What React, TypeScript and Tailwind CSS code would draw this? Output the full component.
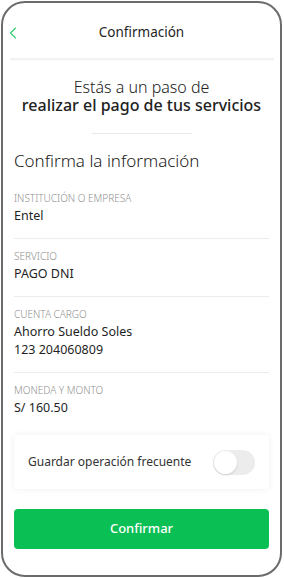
import { ChevronLeft } from "lucide-react";

interface Field {
  label: string;
  values: string[];
}

const FIELDS: Field[] = [
  { label: "INSTITUCIÓN O EMPRESA", values: ["Entel"] },
  { label: "SERVICIO", values: ["PAGO DNI"] },
  { label: "CUENTA CARGO", values: ["Ahorro Sueldo Soles", "123 204060809"] },
  { label: "MONEDA Y MONTO", values: ["S/ 160.50"] },
];

function InfoRow({ field, last }: { field: Field; last: boolean }) {
  return (
    <div className={last ? "pt-[10px]" : "border-b border-[#ececec] pt-[10px] pb-[13px]"}>
      <p className="text-[10px] leading-[14px] font-light text-[#8f8f8f]">{field.label}</p>
      <div className="mt-[2px]">
        {field.values.map((v) => (
          <p key={v} className="text-[12.5px] leading-[18px] text-[#1f1f1f]">
            {v}
          </p>
        ))}
      </div>
    </div>
  );
}

export default function App() {
  return (
    <div className="w-[284px] h-[578px] bg-white" style={{ fontFamily: "'Noto Sans', sans-serif" }}>
      <div className="ml-[1px] mt-[1px] w-[281px] h-[576px] overflow-hidden rounded-[24px] border-2 border-[#6b6b6b] bg-white">
        {/* Header */}
        <div className="relative flex h-[55px] items-center justify-center pt-[3px]">
          <ChevronLeft className="absolute left-0 top-[20px] h-[20px] w-[20px] text-[#2ecc71]" strokeWidth={1.3} />
          <h1 className="text-[13.5px] text-[#1f1f1f]">Confirmación</h1>
        </div>
        <div className="ml-[7px] mr-[6px] h-[3px] bg-gradient-to-b from-[#f0f0f0] to-[#fafafa]" />

        <div className="px-[11px]">
          <div className="mt-[18px] text-center text-[16px] leading-[17px] text-[#222]">
            <p className="font-light">Estás a un paso de</p>
            <p className="mt-[1px] font-medium">realizar el pago de tus servicios</p>
          </div>
          <div className="mx-auto mt-[19px] h-px w-[100px] bg-[#e8e8e8]" />

          <h2 className="mt-[16px] text-[17px] leading-[22px] font-light text-[#222]">
            Confirma la información
          </h2>

          <div className="mt-[9px]">
            {FIELDS.map((f, i) => (
              <InfoRow key={f.label} field={f} last={i === FIELDS.length - 1} />
            ))}
          </div>

          {/* Frequent operation */}
          <div className="mt-[18px] flex h-[54px] items-center justify-between rounded-[4px] bg-white pl-[14px] pr-[14px] shadow-[0_0_6px_rgba(0,0,0,0.07)]">
            <span className="text-[12px] text-[#333]">Guardar operación frecuente</span>
            <div className="flex h-[25px] w-[42px] items-center rounded-full bg-[#ececec] p-[1px]">
              <div className="h-[23px] w-[23px] rounded-full bg-white shadow-[0_1px_2px_rgba(0,0,0,0.15)]" />
            </div>
          </div>

          <button className="mt-[20px] flex h-[40px] w-full items-center justify-center rounded-[4px] bg-[#0abf53] text-[13px] font-medium text-white">
            Confirmar
          </button>
        </div>
      </div>
    </div>
  );
}
